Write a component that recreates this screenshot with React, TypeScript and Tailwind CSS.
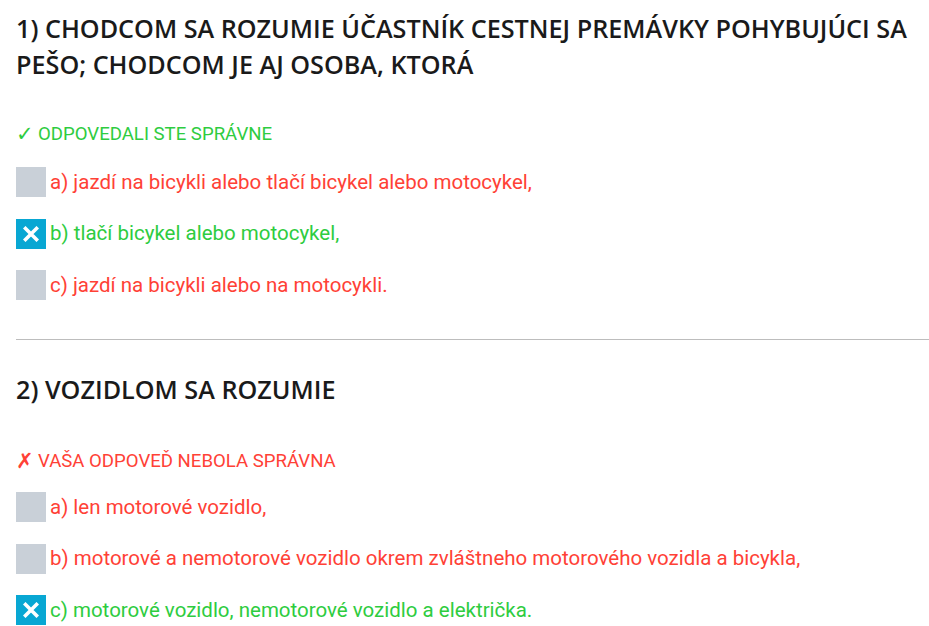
import React from "react";

type Answer = { label: string; checked: boolean; correct: boolean };

const questions: { title: string; ok: boolean; answers: Answer[] }[] = [
  {
    title:
      "1) CHODCOM SA ROZUMIE ÚČASTNÍK CESTNEJ PREMÁVKY POHYBUJÚCI SA PEŠO; CHODCOM JE AJ OSOBA, KTORÁ",
    ok: true,
    answers: [
      { label: "a) jazdí na bicykli alebo tlačí bicykel alebo motocykel,", checked: false, correct: false },
      { label: "b) tlačí bicykel alebo motocykel,", checked: true, correct: true },
      { label: "c) jazdí na bicykli alebo na motocykli.", checked: false, correct: false },
    ],
  },
  {
    title: "2) VOZIDLOM SA ROZUMIE",
    ok: false,
    answers: [
      { label: "a) len motorové vozidlo,", checked: false, correct: false },
      { label: "b) motorové a nemotorové vozidlo okrem zvláštneho motorového vozidla a bicykla,", checked: false, correct: false },
      { label: "c) motorové vozidlo, nemotorové vozidlo a električka.", checked: true, correct: true },
    ],
  },
];

function Box({ checked }: { checked: boolean }) {
  return (
    <div
      className={
        "w-[30px] h-[30px] shrink-0 flex items-center justify-center " +
        (checked ? "bg-[#08a7d3]" : "bg-[#c9d0d8]")
      }
    >
      {checked && (
        <svg width="16" height="16" viewBox="0 0 16 16">
          <path d="M2.5 2.5 L13.5 13.5 M13.5 2.5 L2.5 13.5" stroke="white" strokeWidth="3.6" strokeLinecap="square" />
        </svg>
      )}
    </div>
  );
}

export default function App() {
  const roboto = { fontFamily: "Roboto, 'Liberation Sans', sans-serif" };
  return (
    <div className="bg-white w-[929px] h-[626px] overflow-hidden pl-4">
      {/* Question 1 */}
      <div className="pt-[10px]">
        <h2
          className="text-[25.2px] leading-[36px] font-semibold text-[#1a1a1a] pr-3"
          style={{ fontFamily: "'Open Sans', sans-serif" }}
        >
          {questions[0].title}
        </h2>
        <div
          className="mt-[40px] h-[24px] flex items-center gap-[4px] text-[18.6px] leading-[24px] text-[#2ecc40]"
          style={roboto}
        >
          <span className="text-[21px] leading-[24px]">✓</span>
          <span>ODPOVEDALI STE SPRÁVNE</span>
        </div>
        <div className="mt-[21px] flex flex-col gap-[21.5px]">
          {questions[0].answers.map((a) => (
            <div key={a.label} className="flex items-center gap-[4px] h-[30px]">
              <Box checked={a.checked} />
              <span
                className={"text-[20.5px] " + (a.correct ? "text-[#2ecc40]" : "text-[#ff4136]")}
                style={roboto}
              >
                {a.label}
              </span>
            </div>
          ))}
        </div>
      </div>
      <div className="mt-[39px] h-px bg-[#bdbdbd]" />
      {/* Question 2 */}
      <div className="pt-[31px]">
        <h2
          className="text-[25.2px] leading-[36px] font-semibold text-[#1a1a1a] pr-3"
          style={{ fontFamily: "'Open Sans', sans-serif" }}
        >
          {questions[1].title}
        </h2>
        <div
          className="mt-[42px] h-[24px] flex items-center gap-[4px] text-[18.6px] leading-[24px] text-[#ff4136]"
          style={roboto}
        >
          <span className="text-[21px] leading-[24px]">✗</span>
          <span>VAŠA ODPOVEĎ NEBOLA SPRÁVNA</span>
        </div>
        <div className="mt-[19px] flex flex-col gap-[21.5px]">
          {questions[1].answers.map((a) => (
            <div key={a.label} className="flex items-center gap-[4px] h-[30px]">
              <Box checked={a.checked} />
              <span
                className={"text-[20.5px] " + (a.correct ? "text-[#2ecc40]" : "text-[#ff4136]")}
                style={roboto}
              >
                {a.label}
              </span>
            </div>
          ))}
        </div>
      </div>
    </div>
  );
}
